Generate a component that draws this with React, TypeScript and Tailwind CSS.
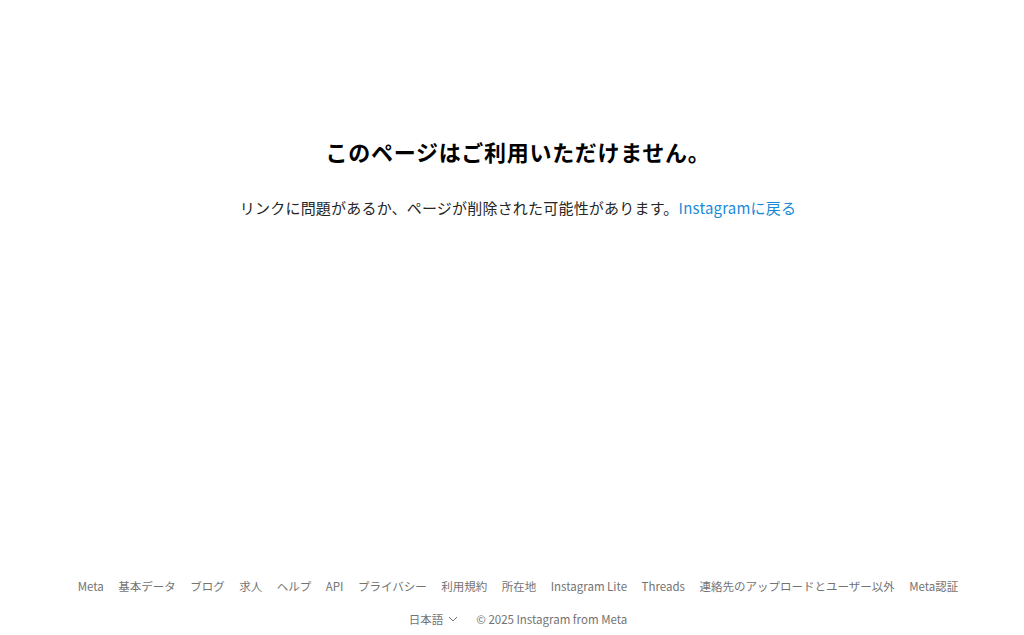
const links = [
  'Meta',
  '基本データ',
  'ブログ',
  '求人',
  'ヘルプ',
  'API',
  'プライバシー',
  '利用規約',
  '所在地',
  'Instagram Lite',
  'Threads',
  '連絡先のアップロードとユーザー以外',
  'Meta認証',
];

export default function App() {
  return (
    <div className="flex h-[635px] flex-col bg-white pl-3 font-['Noto_Sans_CJK_JP','Noto_Sans',sans-serif] text-[#262626]">
      <main className="flex flex-1 flex-col items-center pt-[136px]">
        <h2 className="text-[22px] font-bold leading-[30px] tracking-[0.7px] text-black">
          このページはご利用いただけません。
        </h2>
        <p className="mt-[32px] text-[15px] leading-[20px] tracking-[0.2px]">
          リンクに問題があるか、ページが削除された可能性があります。
          <a href="#" className="text-[#1a8ad8]">
            Instagramに戻る
          </a>
        </p>
      </main>

      <footer className="flex flex-col items-center pb-2 text-[11.5px] leading-4 text-[#737373]">
        <div className="flex flex-wrap justify-center gap-x-[14.5px]">
          {links.map((l) => (
            <a key={l} href="#">
              {l}
            </a>
          ))}
        </div>
        <div className="mt-[17px] flex items-center gap-[18px]">
          <span className="flex items-center gap-[5px]">
            日本語
            <svg width="10" height="10" viewBox="0 0 10 10" fill="none" stroke="#737373" strokeWidth="1">
              <path d="M1 3l4 4 4-4" />
            </svg>
          </span>
          <span>© 2025 Instagram from Meta</span>
        </div>
      </footer>
    </div>
  );
}
